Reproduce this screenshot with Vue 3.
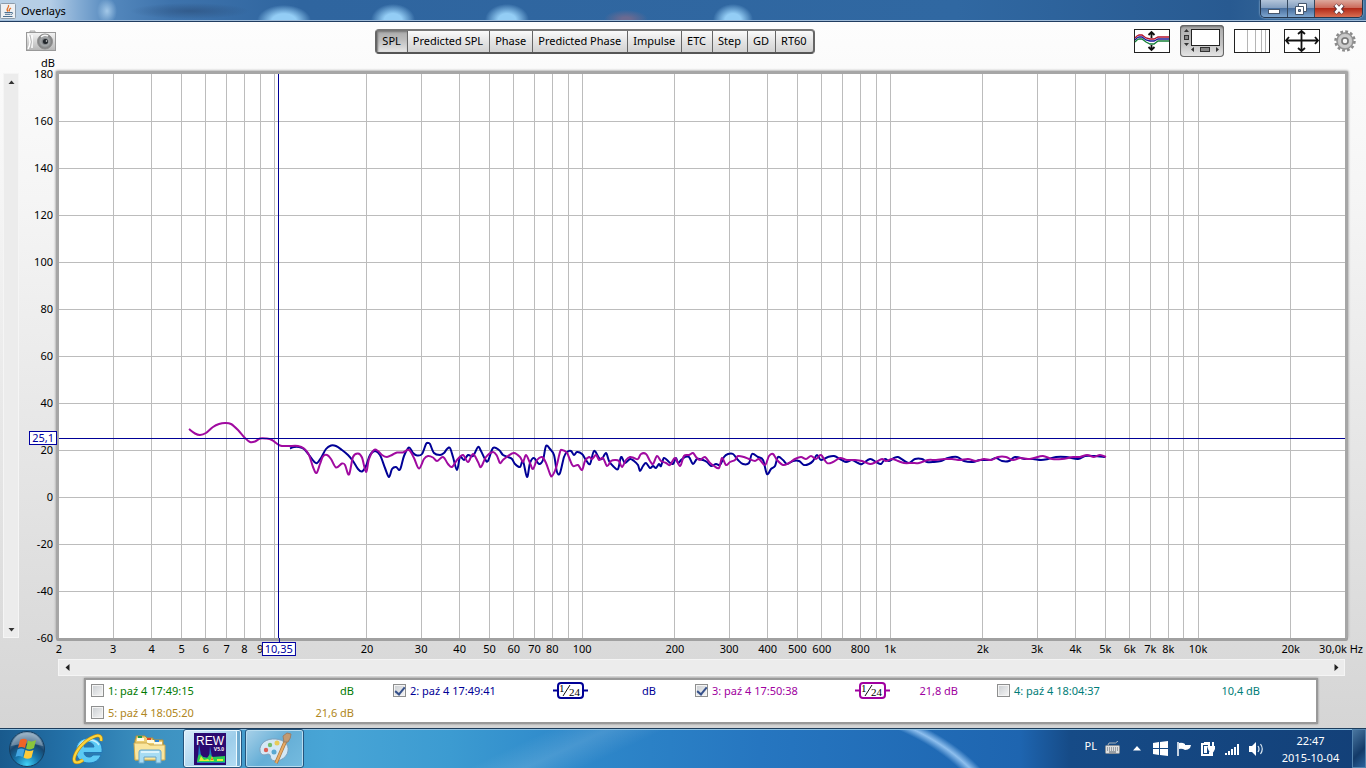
<template>
  <div class="desktop">
    <header class="titleBar">
      <svg class="javaIcon" width="16" height="16" viewBox="0 0 16 16">
        <rect x="0.500" y="0.500" width="15" height="15" rx="1" fill="#eef1f4" stroke="#8d9cab" />
        <path d="M8 8.500C5 6 9.500 5 8.500 2M9.500 8.500C8.500 7 9.500 6 11 5" fill="none" stroke="#e2732b" stroke-width="1.300" />
        <path d="M4.500 9.500h6.500M5 11.300h5.500M3 13.500h9.500M11 9.500c2.500-.5 2 1.500 0 2" fill="none" stroke="#4c7090" />
      </svg>
      <h1>Overlays</h1>
      <div class="windowBtns">
        <button aria-label="Minimize">
          <svg width="14" height="12" viewBox="0 0 14 12"><rect x="1.500" y="6.500" width="11" height="4" fill="#fff" stroke="#46566c" /></svg>
        </button>
        <button aria-label="Restore">
          <svg width="14" height="14" viewBox="0 0 14 14">
            <path d="M4.500 1.500h8v8h-8z" fill="#fff" stroke="#46566c" />
            <path d="M1.500 4.500h8v8h-8z" fill="#fff" stroke="#46566c" />
            <path d="M4.500 7.500h2v2h-2z" fill="#7f98b8" stroke="#46566c" />
          </svg>
        </button>
        <button class="closeBtn" aria-label="Close">
          <svg width="14" height="12" viewBox="0 0 14 12">
            <path d="M3 2l8 8M11 2l-8 8" stroke="#543038" stroke-width="4.500" />
            <path d="M3.500 2l7 8M10.500 2l-7 8" stroke="#fff" stroke-width="2.800" />
          </svg>
        </button>
      </div>
    </header>

    <main class="content">
      <div class="toolBar">
        <button class="iconBtn" aria-label="Capture">
          <svg width="30" height="22" viewBox="0 0 30 22">
            <defs>
              <linearGradient id="camBody" x1="0" y1="0" x2="0" y2="1">
                <stop offset="0" stop-color="#f4f4f4" /><stop offset="1" stop-color="#b5b5b5" />
              </linearGradient>
              <radialGradient id="camLens">
                <stop offset="0.200" stop-color="#5c5f63" /><stop offset="0.550" stop-color="#a5a8aa" /><stop offset="1" stop-color="#777" />
              </radialGradient>
            </defs>
            <path d="M4 3V1h5v2" fill="#ddd" stroke="#aaa" />
            <rect x="0.500" y="2.500" width="29" height="18" fill="url(#camBody)" stroke="#999" />
            <path d="M2 4q4 8 0 15M6 5v13" fill="none" stroke="#fff" stroke-width="1.500" />
            <path d="M4 5q3 7 0 14" fill="none" stroke="#bbb" />
            <circle cx="19" cy="11.500" r="7.500" fill="url(#camLens)" stroke="#909090" />
            <circle cx="19.500" cy="11.500" r="2.500" fill="#22262b" />
            <circle cx="20.500" cy="11" r="0.800" fill="#e8e8e8" />
            <path d="M15 7q3-3 7-1" fill="none" stroke="#f5f5f5" stroke-width="1.500" />
          </svg>
        </button>

        <nav class="tabs">
          <button
            v-for="tab in tabs"
            :key="tab"
            :class="{ active: tab === activeTab }"
            @click="activeTab = tab"
          >{{ tab }}</button>
        </nav>

        <div class="tools">
          <button class="iconBtn" aria-label="Separate traces">
            <svg width="36" height="24" viewBox="0 0 36 24">
              <rect x="0.500" y="0.500" width="35" height="23" fill="#fff" stroke="#222" />
              <path d="M17.500 3v6M17.500 21v-5M14.500 6l3-3 3 3M14.500 18l3 3 3-3" fill="none" stroke="#111" stroke-width="1.800" />
              <path d="M1 9l2-2 2-1h3l4 3 4 1h4l4-2h11" fill="none" stroke="#b4122c" stroke-width="1.300" />
              <path d="M1 11l2-2 2-1h3l4 3 4 1h4l4-2h11" fill="none" stroke="#1a1a9a" stroke-width="1.300" />
              <path d="M1 13l2-2 2-1h3l4 3 4 2h4l4-3h11" fill="none" stroke="#178038" stroke-width="1.300" />
            </svg>
          </button>
          <button class="iconBtn pressed" aria-label="Scrollbars">
            <svg width="44" height="32" viewBox="0 0 44 32">
              <rect x="11.500" y="4.500" width="28" height="16" fill="#fff" stroke="#222" />
              <rect x="4.500" y="10.500" width="4" height="4" fill="#888" stroke="#333" />
              <rect x="20.500" y="22.500" width="9" height="4" fill="#888" stroke="#333" />
              <path d="M4 7l2.500-3L9 7zM4 18l2.500 3L9 18zM14 22v5l-3-2.500zM36 22v5l3-2.500z" fill="#333" />
            </svg>
          </button>
          <button class="iconBtn" aria-label="Frequency axis">
            <svg width="36" height="24" viewBox="0 0 36 24">
              <rect x="0.500" y="0.500" width="35" height="23" fill="#fff" stroke="#222" />
              <path d="M13.500 1v22M21.500 1v22M27.500 1v22M31.500 1v22" stroke="#b5b5b5" />
            </svg>
          </button>
          <button class="iconBtn" aria-label="Graph limits">
            <svg width="36" height="24" viewBox="0 0 36 24">
              <rect x="0.500" y="0.500" width="35" height="23" fill="#fff" stroke="#222" />
              <path d="M2 11.500h32M17.500 2v20M5 8l-3 3.500L5 15M31 8l3 3.500-3 3.500M14 5l3.500-3L21 5M14 19l3.500 3 3.500-3" fill="none" stroke="#111" stroke-width="1.800" />
            </svg>
          </button>
          <button class="iconBtn" aria-label="Settings">
            <svg width="22" height="22" viewBox="0 0 22 22">
              <circle cx="11" cy="11" r="9.500" fill="none" stroke="#8b8b8b" stroke-width="2.500" stroke-dasharray="2.800 2.170" />
              <circle cx="11" cy="11" r="8.200" fill="#a9a9a9" stroke="#858585" />
              <circle cx="11" cy="11" r="5.500" fill="none" stroke="#cbcbcb" stroke-width="3" />
              <circle cx="11" cy="11" r="3" fill="#fafafa" stroke="#777" stroke-width="1.500" />
            </svg>
          </button>
        </div>
      </div>

      <div class="unitRow">dB</div>

      <div class="graphRow">
        <div class="scroll vertical">
          <button aria-label="Scroll up"><svg width="7" height="5" viewBox="0 0 7 5"><path d="M0.500 4L3.500 0.500 6.500 4z" fill="#333" /></svg></button>
          <button aria-label="Scroll down"><svg width="7" height="5" viewBox="0 0 7 5"><path d="M0.500 1L3.500 4.500 6.500 1z" fill="#333" /></svg></button>
        </div>
        <div class="yAxis">
          <span v-for="db in dbLabels" :key="db">{{ db }}</span>
        </div>
        <div class="plot">
          <svg class="graph">
            <line v-for="f in gridFreqs" :key="'f' + f" class="gridLine" :x1="freqPos(f)" :x2="freqPos(f)" y1="0" y2="100%" />
            <line v-for="db in dbLabels.slice(1, -1)" :key="'d' + db" class="gridLine" x1="0" x2="100%" :y1="dbPos(db)" :y2="dbPos(db)" />
            <svg width="100%" height="100%" viewBox="59 74 1286 564" preserveAspectRatio="none">
              <path class="trace blue" :d="smooth(traceBlue)" />
              <path class="trace purple" :d="smooth(tracePurple)" />
            </svg>
            <line class="cursorLine" x1="0" x2="100%" :y1="dbPos(cursor.db)" :y2="dbPos(cursor.db)" />
            <line class="cursorLine" :x1="freqPos(cursor.freq)" :x2="freqPos(cursor.freq)" y1="0" y2="100%" />
          </svg>
          <span class="cursorTag dbTag" :style="{ top: dbPos(cursor.db) }">25,1</span>
          <span class="cursorTag freqTag" :style="{ left: freqPos(cursor.freq) }">10,35</span>
        </div>
      </div>

      <svg class="xAxis">
        <text v-for="tick in freqLabels" :key="tick.text" :x="freqPos(tick.f)" y="15">{{ tick.text }}</text>
        <text class="lastTick" x="100%" dx="18" y="15">30,0k Hz</text>
      </svg>

      <div class="scroll horizontal">
        <button aria-label="Scroll left"><svg width="5" height="7" viewBox="0 0 5 7"><path d="M4.500 0L0.500 3.500 4.500 7z" fill="#222" /></svg></button>
        <button aria-label="Scroll right"><svg width="5" height="7" viewBox="0 0 5 7"><path d="M0.500 0L4.500 3.500 0.500 7z" fill="#222" /></svg></button>
      </div>

      <section class="legend">
        <div v-for="m in measurements" :key="m.id" class="measurement" :style="{ color: m.color }">
          <input :id="'m' + m.id" v-model="m.shown" type="checkbox">
          <label :for="'m' + m.id">{{ m.id }}: {{ m.name }}</label>
          <svg v-if="m.smoothed" class="smoothing" width="35" height="17" viewBox="0 0 35 17">
            <path d="M0 8.500h35" :stroke="m.color" stroke-width="2" />
            <rect x="5" y="1" width="25" height="15" rx="3" fill="#fff" :stroke="m.color" stroke-width="2" />
            <path d="M10 14l7-11" stroke="#111" />
            <text x="6" y="10">1</text>
            <text x="16" y="14">24</text>
          </svg>
          <span class="level">{{ m.level }} dB</span>
        </div>
      </section>
    </main>

    <footer class="taskBar">
      <button class="startBtn" aria-label="Start">
        <svg width="38" height="38" viewBox="0 0 38 38">
          <defs>
            <radialGradient id="orb" cx="0.500" cy="0.950" r="0.950">
              <stop offset="0" stop-color="#41d3f8" /><stop offset="0.350" stop-color="#1878ae" /><stop offset="0.650" stop-color="#17466f" /><stop offset="1" stop-color="#89a7be" />
            </radialGradient>
          </defs>
          <circle cx="19" cy="19" r="17.500" fill="url(#orb)" stroke="#163e60" />
          <path d="M3 16Q7 3 19 3t16 13q-15-5-32 0z" fill="#fff" opacity="0.280" />
          <path d="M12 10q4-2.500 7 0l-2 8q-4-2-7 0z" fill="#ef6327" />
          <path d="M20 10.500q4 2 8-.5l-2 8q-4 2.500-8 .5z" fill="#8ac53c" />
          <path d="M9.500 19.500q4-2 7 0l-2 7.500q-4-2-7 0z" fill="#44a6e2" />
          <path d="M17.500 20q4 2 8 0l-2 7.500q-4 2.500-8 0z" fill="#fecb3a" />
        </svg>
      </button>
      <button class="pinned" aria-label="Internet Explorer">
        <svg width="32" height="34" viewBox="0 0 32 34">
          <path d="M17 6C9 6 4 11 4 18.500S9 31 17 31c6 0 10-3 12-8h-8c-1 1.500-2 2-4 2-3 0-5-2-5-4.500h18C31 11 26 6 17 6zm-5 9c.5-3 2.500-4.500 5-4.500s4.500 1.500 5 4.500z" fill="#5ccaf5" stroke="#2277b6" />
          <path d="M7 14q3-6 10-6 7 0 10 5" fill="none" stroke="#c5effe" stroke-width="1.500" />
          <path d="M29 9c1-5-2-7-8-4C12 9 3 19 2 27c0 5 5 4 9 1" fill="none" stroke="#ba8b16" stroke-width="3.500" />
          <path d="M29 9c1-5-2-7-8-4C12 9 3 19 2 27c0 5 5 4 9 1" fill="none" stroke="#fcd53c" stroke-width="2.200" />
        </svg>
      </button>
      <button class="pinned" aria-label="Explorer">
        <svg width="34" height="30" viewBox="0 0 34 30">
          <path d="M3 4V2h9l2 2h6v2h10v20H2V6z" fill="#eccd72" stroke="#b28e35" />
          <path d="M4 4h7v3H4zM14 6h7v3h-7zM21 8h8v3h-8z" fill="#fffbe2" />
          <path d="M5 2h4v2H5z" fill="#1e9b4b" /><path d="M14 4h4v2h-4z" fill="#e14427" /><path d="M22 6h4v2h-4z" fill="#2f83d5" />
          <path d="M1 9h13l3 2h15v15H2z" fill="#fae69e" stroke="#cfac50" />
          <path d="M6 29V18q0-2 2-2h18q2 0 2 2v11h-5v-6H11v6z" fill="#a7dcf4" stroke="#69a5c8" />
          <path d="M8 18h18" stroke="#edfbff" stroke-width="1.500" />
        </svg>
      </button>
      <button class="task running" aria-label="REW V5.0">
        <svg width="32" height="32" viewBox="0 0 32 32">
          <rect width="32" height="32" fill="#2b0a70" />
          <path d="M3 30l1-6 1-13 2 11 2 2 6 1 1-12 2 11 3 1h10v5z" fill="#2276c0" />
          <path d="M3 29l1-6 2-2 3 3 4 1 3-4 2 3 13-1v6z" fill="#27ce54" />
          <path d="M5 28l2-5 3 4 4-1 2 2h-4zM16 28l2-5 2 5zM23 26h6v2h-6z" fill="#e8e83a" />
          <path d="M17 27l1-3 1 3z" fill="#ef4f23" />
          <text x="16" y="12" class="rewText">REW</text>
          <text x="25" y="18" class="rewVersion">V5.0</text>
        </svg>
      </button>
      <button class="task" aria-label="Paint">
        <svg width="34" height="34" viewBox="0 0 34 34">
          <path d="M18 7C8 6 1 12 2 19c1 5 5 4 8 3 3 0 2 3 3 5 4 5 16 0 17-8C31 12 26 8 18 7z" fill="#d5e8f5" stroke="#7fa1bc" />
          <circle cx="8" cy="18" r="2.200" fill="#dc6055" /><circle cx="12" cy="13" r="2.200" fill="#74bd70" />
          <circle cx="19" cy="11" r="2.500" fill="#e8cc59" /><circle cx="16" cy="20" r="2.500" fill="#5aa8d0" />
          <path d="M28 8L18 31" stroke="#a9763f" stroke-width="3.500" />
          <path d="M28 8L18 31" stroke="#e8ab66" stroke-width="2" />
          <path d="M26 10l-1-6 4-3 4 1q0 4-3 8z" fill="#c39a71" stroke="#9a8069" />
        </svg>
      </button>

      <div class="tray">
        <span class="language">PL</span>
        <svg width="16" height="16" viewBox="0 0 16 16">
          <path d="M3 4q0-3 4-2t6-2" fill="none" stroke="#aab4bc" />
          <rect x="0.500" y="4.500" width="14" height="8" rx="1" fill="#dedfe0" stroke="#888f96" />
          <path d="M2 7h11M2 9h11" stroke="#555f69" stroke-dasharray="1 1" /><path d="M4 11h7" stroke="#555f69" />
        </svg>
        <svg class="trayArrow" width="8" height="5" viewBox="0 0 8 5"><path d="M0 4.500L4 0l4 4.500z" fill="#fff" /></svg>
        <svg width="15" height="15" viewBox="0 0 15 15">
          <path d="M0 2l6-1v6H0zM7 1l8-1v7H7zM0 8h6v6l-6-1zM7 8h8v7l-8-1z" fill="#fff" />
        </svg>
        <svg width="16" height="16" viewBox="0 0 16 16">
          <path d="M2 1v14" stroke="#fff" stroke-width="1.500" />
          <path d="M3 2q3-1 6 1v6Q6 7 3 8zM9 4h6l-1 3q-2 2-5 2z" fill="#fff" />
        </svg>
        <svg width="16" height="16" viewBox="0 0 16 16">
          <path d="M8 3H2v11h8v-3" fill="none" stroke="#fff" stroke-width="2" />
          <path d="M4 5h3v7H4zM4 1h4v2H4z" fill="#fff" />
          <path d="M7 5h8v3q-1 3-3 4t-4-4zM8 1h2v4H8zM12 1h2v4h-2zM11 11h2v4H9v-1h2z" fill="#fff" />
        </svg>
        <svg width="16" height="16" viewBox="0 0 16 16">
          <path d="M1 14v-2h2v2zM4 14v-4h2v4zM7 14V8h2v6zM10 14V6h2v8zM13 14V3h2v11z" fill="#fff" />
        </svg>
        <svg width="16" height="16" viewBox="0 0 16 16">
          <path d="M1 5h3l4-4v14l-4-4H1z" fill="#fff" />
          <path d="M10 5q2 3 0 6M12.500 3q3.500 5 0 10" fill="none" stroke="#dce9f3" stroke-width="1.200" />
        </svg>
      </div>
      <div class="clock">
        <span>22:47</span>
        <span>2015-10-04</span>
      </div>
      <button class="showDesktop" aria-label="Show desktop"></button>
    </footer>
  </div>
</template>

<script setup>
import { ref, reactive } from 'vue'

const tabs = ['SPL', 'Predicted SPL', 'Phase', 'Predicted Phase', 'Impulse', 'ETC', 'Step', 'GD', 'RT60']
const activeTab = ref('SPL')

const measurements = reactive([
  { id: 1, name: 'paź 4 17:49:15', level: '', color: '#007a00', shown: false },
  { id: 2, name: 'paź 4 17:49:41', level: '', color: '#000096', shown: true, smoothed: true },
  { id: 3, name: 'paź 4 17:50:38', level: '21,8', color: '#a000a0', shown: true, smoothed: true },
  { id: 4, name: 'paź 4 18:04:37', level: '10,4', color: '#007d78', shown: false },
  { id: 5, name: 'paź 4 18:05:20', level: '21,6', color: '#af8620', shown: false }
])

const cursor = { freq: 10.35, db: 25.1 }
const minFreq = 2
const maxFreq = 30000
const maxDb = 180
const minDb = -60

// axis ticks
const dbLabels = []
for (let db = maxDb; db >= minDb; db -= 20) dbLabels.push(db)

const gridFreqs = []
for (let decade = 1; decade <= 10000; decade *= 10) {
  for (let n = 1; n < 10; n++) {
    const f = n * decade
    if (f > minFreq && f < maxFreq) gridFreqs.push(f)
  }
}

const freqLabels = [
  2, 3, 4, 5, 6, 7, 8, 9, 20, 30, 40, 50, 60, 70, 80, 100, 200, 300, 400, 500, 600, 800,
  1000, 2000, 3000, 4000, 5000, 6000, 7000, 8000, 10000, 20000
].map(f => ({ f, text: f >= 1000 ? f / 1000 + 'k' : String(f) }))

function freqPos(f) {
  return Math.log(f / minFreq) / Math.log(maxFreq / minFreq) * 100 + '%'
}

function dbPos(db) {
  return (maxDb - db) / (maxDb - minDb) * 100 + '%'
}

const tracePurple = `189,429 195,433.5 200,435 206,433 213,427 219,424 225,423 231,424 238,430 245,438 250,442
  255,441.5 260,438.5 266,438.5 272,440 280,445.5 288,446 298,446 304,448.5 309,455 313,467 316.5,473 320,464
  323,456.5 327,455 331,459 336,467.5 342,463.5 345,465 349,474.5 353,457 358,453.5 362,457.5 366,472 369,459
  374,450 378,451 382,455 387,457 392,455 397,452.5 403,452.5 409,450 414,458 419,468.5 424,459 428,456
  433,457.5 437,461 443,457 448,464 452,467 457,460 463,455 468,462 473,454 478,462 481,467 486,457 493,452
  497,456 500,463 503,460 508,456 514,453 520,457 523,462 526,455 530,463 533,469 537,460 542,457 546,463
  550,474 552,476 556,468 560,452 562,450 567,453 570,460 573,466 578,465 582,470 585,461 589,457 592,459
  596,455 599,460 603,458 607,466 611,461 615,460 619,461 622,467 626,460 630,457 634,458 638,459 641,454
  646,454 650,461 653,464 657,456 661,461 666,463 670,465 675,458 680,466 684,456 689,455 693,453 696,457
  700,460 705,457 710,463 714,466 719,468 722,458 726,465 730,462 735,460 738,456 744,457 749,459 755,461
  759,459 765,465 769,456 773,454 777,460 783,465 789,463 795,459 801,457 806,459 811,456 816,459 821,455
  827,463 833,462 840,458 847,460 855,460 862,461 870,464 876,462 882,459 886,461 892,459 898,461 904,463
  912,463 919,463 928,460 936,460 944,459 952,459 960,460 968,459 976,461 984,459 991,460 998,457 1006,457
  1013,460 1020,458 1028,459 1034,458 1043,456 1052,459 1062,459 1073,457 1080,457 1087,455 1094,457
  1100,455 1106,457`

const traceBlue = `290,448.5 294,447 299,447 304,449 309,455 314,461.5 317,463 321,458 326,449 331,445.5 336,446
  342,450 348,455 353,461 358,469 362,471.5 366,466 370,455 375,451 380,455 385,468 389,477 392,469 396,467
  400,469.5 404,456 409,447.5 413,453 417,455.5 422,454 426,444 428,443 430,444 434,453 440,455 444,453
  447,449 450,448 453,457 457,470 460,457 464,460 468,455 473,456 478,447 481,451 485,459 488,461 493,448
  499,450 503,455 508,457 512,459 515,464 520,467 523,461 527,477 530,463 534,458 539,464 543,460 546,446
  550,449 554,455 557,472 560,473 564,457 567,452 571,451 574,455 577,452 582,454 586,460 590,464 594,451
  599,458 602,459 606,453 609,461 613,466 618,469 621,457 625,463 630,459 634,461 638,465 640,471 643,466
  646,463 650,468 653,466 656,468 659,464 661,466 664,458 669,462 673,464 676,458 678,463 681,460 685,457
  689,457 693,464 697,459 703,460 707,462 711,466 716,464 720,465 724,457 728,454 733,454 738,460 743,464
  749,463 752,454 758,457 763,460 767,474 771,469 775,466 778,457 783,460 787,464 793,461 799,461 804,465
  809,464 813,461 817,455 821,460 828,457 834,456 840,459 846,462 852,460 858,463 862,464 870,459 876,462
  881,464 885,459 889,461 894,458 898,457 903,460 909,463 915,459 922,459 927,462 934,462 941,461 948,458
  957,457 964,461 973,462 980,460 990,460 996,458 1002,461 1009,461 1015,457 1025,459 1033,459 1041,460
  1048,459 1056,457 1066,457 1078,459 1085,456 1094,456 1105,457`

// turn the sample points into one smooth curve
function smooth(samples) {
  const pts = samples.trim().split(/\s+/).map(p => p.split(',').map(Number))
  let d = `M${pts[0][0]} ${pts[0][1]}`
  for (let i = 0; i < pts.length - 1; i++) {
    const a = pts[i - 1] || pts[i]
    const b = pts[i]
    const c = pts[i + 1]
    const e = pts[i + 2] || c
    d += `C${b[0] + (c[0] - a[0]) / 6} ${b[1] + (c[1] - a[1]) / 6} ${c[0] - (e[0] - b[0]) / 6} ${c[1] - (e[1] - b[1]) / 6} ${c[0]} ${c[1]}`
  }
  return d
}
</script>

<style>
body {
  margin: 0;
}
</style>

<style scoped>
.desktop {
  height: 100vh;
  display: flex;
  flex-direction: column;
  font-family: "Noto Sans", "Open Sans", sans-serif;
  font-size: 11px;
  color: #000;
  overflow: hidden;
}

.desktop * {
  box-sizing: border-box;
}

button {
  margin: 0;
  padding: 0;
  border: none;
  background: none;
  font: inherit;
  color: inherit;
}

svg {
  display: block;
  flex: none;
}

/* title bar */
.titleBar {
  height: 22px;
  flex: none;
  display: flex;
  align-items: center;
  gap: 5px;
  padding: 0 3px 0 0;
  border-bottom: 1px solid #203c60;
  box-shadow: inset 0 -1px #9fbbd8;
  background:
    radial-gradient(ellipse 27px 16px at 284px 21px, #93cdf5 45%, transparent),
    radial-gradient(ellipse 22px 16px at 393px 20px, #93cdf5 40%, transparent),
    radial-gradient(ellipse 22px 16px at 507px 20px, #93cdf5 40%, transparent),
    radial-gradient(ellipse 22px 9px at 626px 19px, #6b6a91 20%, transparent),
    radial-gradient(ellipse 20px 16px at 733px 20px, #93cdf5 40%, transparent),
    radial-gradient(ellipse 10px 13px at 107px 11px, #a3c8e8, transparent),
    radial-gradient(ellipse 60px 8px at 190px 11px, rgba(40, 70, 110, 0.5), transparent),
    linear-gradient(90deg, #b8d0e6, #b4cde6 50px, #84acd4 78px, #5488bd 110px, #3e73ac 170px, #2f659f 300px, #3068a2 70%, #285a91 90%, #40719f);
}

.titleBar h1 {
  margin: 0;
  font-size: 11px;
  font-weight: normal;
}

.windowBtns {
  margin-left: auto;
  align-self: flex-start;
  display: flex;
  height: 18px;
  border: 1px solid #24374f;
  border-top: none;
  border-radius: 0 0 5px 5px;
  overflow: hidden;
  box-shadow: 0 0 2px #cfe2f2;
}

.windowBtns button {
  width: 27px;
  display: flex;
  align-items: center;
  justify-content: center;
  border-right: 1px solid #34485f;
  background: linear-gradient(#b3c4d9, #819dbf 48%, #4a709f 50%, #7da5cf);
}

.windowBtns .closeBtn {
  width: 47px;
  border-right: none;
  background: linear-gradient(#dda89c, #cb6757 48%, #b22a18 50%, #d96f52);
}

/* graph window */
.content {
  flex: 1;
  min-height: 0;
  display: flex;
  flex-direction: column;
  padding-bottom: 4px;
  background: linear-gradient(#fdfdfd, #f5f5f5 25%, #d5d5d5);
}

.toolBar {
  height: 38px;
  flex: none;
  display: flex;
  align-items: center;
  justify-content: space-between;
  padding: 0 10px 0 26px;
}

.tools {
  display: flex;
  align-items: center;
  gap: 10px;
}

.tools .iconBtn:nth-child(n + 4) {
  margin-left: 4px;
}

.pressed {
  border-radius: 4px;
  background: linear-gradient(#aaa, #c4c4c4 60%, #e8e8e8);
  box-shadow: inset 0 0 0 1px #666, inset 0 2px 2px #777;
}

.tabs {
  display: flex;
  height: 25px;
  border: 2px solid #666;
  border-color: #777 #666 #555;
  border-radius: 4px;
  background: linear-gradient(#fafafa, #e4e4e4 50%, #d2d2d2);
}

.tabs button {
  padding: 0 6px 2px 5px;
  border-right: 1px solid #666;
  font-size: 11px;
}

.tabs button:last-child {
  border-right: none;
}

.tabs .active {
  background: linear-gradient(#aaa, #bcbcbc 40%, #e6e6e6);
  box-shadow: inset 1px 1px 2px #777;
}

.unitRow {
  height: 11px;
  flex: none;
  width: 55px;
  line-height: 6px;
  text-align: right;
}

.graphRow {
  flex: 1;
  min-height: 0;
  display: flex;
  padding: 0 18px 0 3px;
}

.scroll {
  display: flex;
  justify-content: space-between;
  background: #ececec;
  border: 1px solid #f5f5f5;
}

.scroll button {
  width: 16px;
  height: 16px;
  display: flex;
  align-items: center;
  justify-content: center;
}

.vertical {
  width: 16px;
  margin: 2px 0 0;
  flex-direction: column;
}

.vertical button {
  width: 14px;
}

.yAxis {
  width: 37px;
  padding: 3px 3px 0 0;
  margin-bottom: -7px;
  margin-top: -7px;
  display: flex;
  flex-direction: column;
  justify-content: space-between;
  text-align: right;
  line-height: 14px;
}

.plot {
  position: relative;
  flex: 1;
  border: 3px solid #a6a6a6;
  border-bottom-width: 0;
  border-radius: 2px;
  background: #fff;
  box-shadow: 0 3px #a0a0a0, 0 0 2px 1px #bbb;
}

.graph {
  width: 100%;
  height: 100%;
}

.gridLine {
  stroke: #bcbcbc;
  shape-rendering: crispEdges;
}

.cursorLine {
  stroke: #000096;
  shape-rendering: crispEdges;
}

.trace {
  fill: none;
  stroke-width: 2;
  stroke-linejoin: round;
  vector-effect: non-scaling-stroke;
}

.blue {
  stroke: #000096;
}

.purple {
  stroke: #a00aa0;
}

.cursorTag {
  position: absolute;
  border: 1px solid #0000a0;
  background: #fff;
  color: #0000a0;
  line-height: 12px;
  padding: 0 2px;
}

.dbTag {
  right: 100%;
  margin-right: 2px;
  transform: translateY(-50%);
}

.freqTag {
  top: 100%;
  margin-top: 4px;
  transform: translateX(-50%);
  z-index: 1;
}

.freqTag::before {
  content: "";
  position: absolute;
  left: 50%;
  bottom: 100%;
  height: 5px;
  border-left: 1px solid #0000a0;
}

.xAxis {
  width: calc(100% - 80px);
  height: 21px;
  margin-left: 59px;
  overflow: visible;
}

.xAxis text {
  text-anchor: middle;
}

.xAxis .lastTick {
  text-anchor: end;
}

.horizontal {
  height: 17px;
  flex: none;
  margin: 0 21px 2px 58px;
  align-items: center;
}

/* measurement legend */
.legend {
  flex: none;
  margin: 0 48px 0 84px;
  padding: 0 17px 0 5px;
  display: grid;
  grid-template-columns: repeat(4, 1fr);
  row-gap: 2px;
  border: 2px solid #999;
  background: #fff;
  box-shadow: 0 0 2px #888;
}

.measurement {
  height: 20px;
  padding-right: 39px;
  display: flex;
  align-items: center;
}

.measurement input {
  appearance: none;
  width: 13px;
  height: 13px;
  margin: 0 4px 0 0;
  display: flex;
  justify-content: center;
  border: 1px solid #8e8f8f;
  background: linear-gradient(135deg, #c9cdd1, #f6f6f6);
  box-shadow: inset 0 0 0 1px #f4f4f4;
}

.measurement input:checked::after {
  content: "";
  width: 4px;
  height: 8px;
  border: solid #35508a;
  border-width: 0 2px 2px 0;
  transform: rotate(40deg);
}

.smoothing {
  margin-left: auto;
}

.smoothing text {
  font-family: "Liberation Serif", serif;
  font-size: 11px;
  fill: #000;
}

.level {
  width: 68px;
  margin-left: auto;
  text-align: right;
}

.smoothing + .level {
  margin-left: 0;
}

/* task bar */
.taskBar {
  height: 40px;
  flex: none;
  display: flex;
  align-items: center;
  border-top: 1px solid #1d3d5c;
  box-shadow: inset 0 1px #8dc0e2;
  background:
    radial-gradient(ellipse 236px 154px at -80px 120px, transparent 92%, #8ebfee 96%, transparent 100%) 860px 0 / 160px 40px no-repeat,
    linear-gradient(155deg, transparent 38%, rgba(255, 255, 255, 0.12) 42%, transparent 46%),
    linear-gradient(90deg, #195a8d, #2472a9 70px, #3d91c0 150px, #48a5d6 330px, #3c9bd1 450px, #2f8acb 560px, #2676c0 760px, #1e65b0 1020px, #164b87 1070px, #134078);
}

.startBtn {
  margin: 0 24px 0 8px;
}

.pinned {
  width: 62px;
  display: flex;
  justify-content: center;
  padding-right: 26px;
}

.task {
  align-self: stretch;
  width: 59px;
  margin-right: 3px;
  display: flex;
  align-items: center;
  justify-content: center;
  border: 1px solid #25547c;
  border-radius: 3px;
  background: linear-gradient(135deg, #a8d1e9, #65aed6 50%, #75bbdf);
  box-shadow: inset 0 0 0 1px #b8ddf0;
}

.running {
  margin-left: -11px;
  padding-right: 5px;
  background: linear-gradient(135deg, #dceefa, #9dcdea 60%, #b6def5);
  box-shadow: inset 0 0 0 1px #e5f6ff, inset -4px 0 #6fabd0, inset -5px 0 #eefaff;
}

.rewText {
  font-family: "Liberation Sans", sans-serif;
  font-size: 12px;
  text-anchor: middle;
  fill: #fff;
}

.rewVersion {
  font-family: "Liberation Sans", sans-serif;
  font-size: 5px;
  font-weight: bold;
  text-anchor: middle;
  fill: #fff;
}

.tray {
  margin-left: auto;
  display: flex;
  align-items: center;
  gap: 8px;
  color: #fff;
}

.language {
  font-size: 11px;
  line-height: 16px;
  padding-bottom: 6px;
}

.trayArrow {
  margin: 0 4px;
}

.clock {
  width: 88px;
  padding-left: 5px;
  display: flex;
  flex-direction: column;
  align-items: center;
  color: #fff;
  font-size: 11px;
  line-height: 17px;
}

.showDesktop {
  align-self: stretch;
  width: 14px;
  border: 1px solid #5384af;
  background: linear-gradient(135deg, #49769f, #133a68 60%, #2b639c);
}
</style>
